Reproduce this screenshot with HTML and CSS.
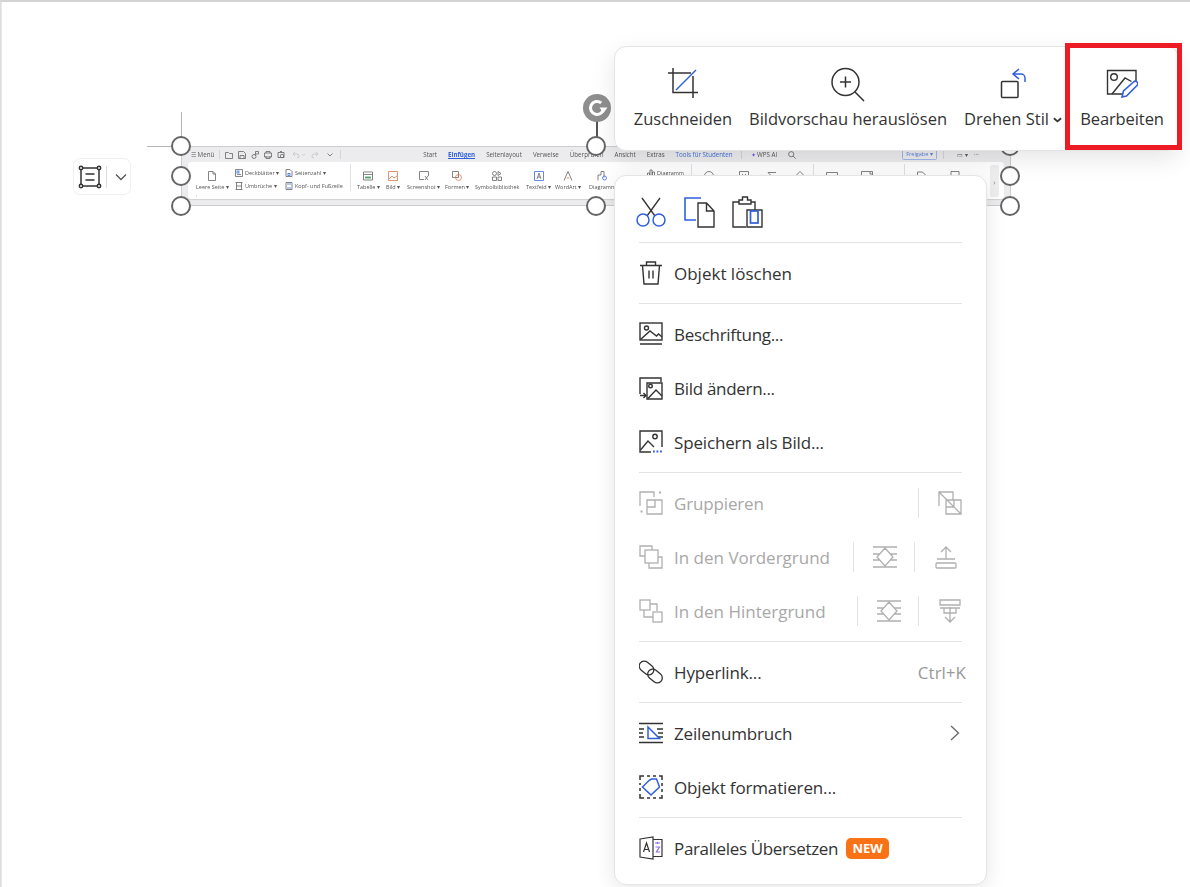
FILE: index.html
```html
<!DOCTYPE html>
<html lang="de">
<head>
<meta charset="utf-8">
<title>Bild Kontextmenü</title>
<link rel="stylesheet" href="styles.css">
</head>
<body>
<div class="canvas">
  <!-- layout options button -->
  <div class="layout-btn">
    <svg class="layout-ico" viewBox="0 0 24 24" width="24" height="24" fill="none" stroke="#333" stroke-width="1.500"><rect x="3" y="3" width="18" height="18"/><path d="M7.500 9h9M7.500 15h9"/><circle cx="3" cy="3" r="1.700" fill="#fff"/><circle cx="21" cy="3" r="1.700" fill="#fff"/><circle cx="3" cy="21" r="1.700" fill="#fff"/><circle cx="21" cy="21" r="1.700" fill="#fff"/></svg>
    <span class="layout-div"></span>
    <svg viewBox="0 0 12 12" width="12" height="12" fill="none" stroke="#555" stroke-width="1.300"><path d="M1 3.500 6 8.500 11 3.500"/></svg>
  </div>

  <!-- guides -->
  <div class="guide-v"></div>
  <div class="guide-h"></div>

  <!-- embedded ribbon picture -->
  <div class="shot">
    <div class="shot-top">
      <span class="t m">☰ Menü</span>
      <span class="vbar"></span>
      <span class="qas">
        <svg viewBox="0 0 8 8" width="8" height="8"><path d="M.5 1.500h3l1 1h3v5h-7z"/></svg>
        <svg viewBox="0 0 8 8" width="8" height="8"><path d="M.5.500h5l2 2v5h-7zM2 7.500v-3h4v3"/></svg>
        <svg viewBox="0 0 8 8" width="8" height="8"><circle cx="3" cy="5.500" r="2"/><path d="M4.500 4V.500h3v2.500h-3"/></svg>
        <svg viewBox="0 0 8 8" width="8" height="8"><path d="M2 2V.500h4V2M.5 2h7v4h-7zM2 5v2.500h4V5"/></svg>
        <svg viewBox="0 0 8 8" width="8" height="8"><path d="M1 1.500h6v5H1zM3 .500h2"/><circle cx="5" cy="5" r="1.700"/></svg>
        <svg class="faint wide" viewBox="0 0 14 8" width="14" height="8"><path d="M1 3l2-2M1 3l2 2M1 3h4a2 2 0 0 1 0 4M10 3l1.500 1.500L13 3"/></svg>
        <svg class="faint" viewBox="0 0 8 8" width="8" height="8"><path d="M7 3L5 1M7 3L5 5M7 3H3a2 2 0 0 0 0 4"/></svg>
        <svg class="mid" viewBox="0 0 6 4" width="6" height="4"><path d="M.5.500L3 3 5.500.500"/></svg>
      </span>
      <span class="vbar"></span>
      <span class="tabs">
        <span class="t">Start</span>
        <span class="t active">Einfügen</span>
        <span class="t">Seitenlayout</span>
        <span class="t">Verweise</span>
        <span class="t">Überprüfen</span>
        <span class="t">Ansicht</span>
        <span class="t">Extras</span>
        <span class="t blue">Tools für Studenten</span>
        <span class="vbar"></span>
        <span class="t"><span class="spark">✦</span> WPS AI</span>
        <svg class="lens" viewBox="0 0 8 8" width="8" height="8"><circle cx="3.200" cy="3.200" r="2.600"/><path d="M5 5l2.700 2.700"/></svg>
      </span>
      <span class="share">Freigabe ▾</span>
      <span class="vbar"></span>
      <span class="t tail">▭ ▾ &nbsp;&nbsp; ···</span>
    </div>
    <div class="shot-ribbon">
      <div class="rb"><svg viewBox="0 0 10 10" width="10" height="10"><path d="M1.500.500h4.500l2.500 2.500v6.500h-7zM6 .500V3h2.500"/></svg><span class="t">Leere Seite ▾</span></div>
      <div class="rb-stack">
        <span class="t"><svg viewBox="0 0 8 8" width="8" height="8"><path d="M.5.500h7v7h-7zM2 5.500h4"/><rect class="bl" x="2" y="2" width="2" height="2"/></svg>Deckblätter ▾</span>
        <span class="t"><svg viewBox="0 0 8 8" width="8" height="8"><path d="M.5.500h7M.5 7.500h7M1.500.500v7M6.500.500v7M1.500 4h5"/></svg>Umbrüche ▾</span>
      </div>
      <div class="rb-stack">
        <span class="t"><svg viewBox="0 0 8 8" width="8" height="8"><path d="M1 .500h4l2 2v5H1z"/><rect class="bl" x="3" y="4.500" width="2" height="2"/></svg>Seitenzahl ▾</span>
        <span class="t"><svg viewBox="0 0 8 8" width="8" height="8"><path d="M1 .500h6v7H1z"/><path class="bl" d="M2 2h4M2 6h4"/></svg>Kopf- und Fußzeile</span>
      </div>
      <span class="rsep"></span>
      <div class="rb"><svg viewBox="0 0 10 10" width="10" height="10"><path d="M.5 1h9v8h-9zM.5 3.500h9"/><path class="gr" d="M3 5v3M5 5v3M7 5v3M2 6.500h6"/></svg><span class="t">Tabelle ▾</span></div>
      <div class="rb"><svg viewBox="0 0 10 10" width="10" height="10"><path class="or" d="M.5.500h9v9h-9zM1 8l3-3 2 2 3-2"/></svg><span class="t">Bild ▾</span></div>
      <div class="rb"><svg viewBox="0 0 10 10" width="10" height="10"><path d="M5 8.500H.5v-8h9V5M6 5l3 4M9 5L6 9"/></svg><span class="t">Screenshot ▾</span></div>
      <div class="rb"><svg viewBox="0 0 10 10" width="10" height="10"><path d="M.5.500h6v6h-6z"/><circle class="or" cx="6.500" cy="6.500" r="3"/></svg><span class="t">Formen ▾</span></div>
      <div class="rb"><svg viewBox="0 0 10 10" width="10" height="10"><circle cx="2.500" cy="2.500" r="2"/><path d="M6 .500l3 2-3 2zM.5 6h4v3.500h-4zM6 6h3.500v3.500H6z"/></svg><span class="t">Symbolbibliothek</span></div>
      <div class="rb"><svg viewBox="0 0 10 10" width="10" height="10"><path class="bl" d="M.5.500h9v9h-9z"/><path d="M3 8l2-6 2 6M3.700 6h2.600"/></svg><span class="t">Textfeld ▾</span></div>
      <div class="rb"><svg viewBox="0 0 10 10" width="10" height="10"><path d="M1 9.500L5 .500l4 9"/><path class="or" d="M3.500 7h3"/></svg><span class="t">WordArt ▾</span></div>
      <div class="rb"><svg viewBox="0 0 10 10" width="10" height="10"><path d="M1 9.500V4h3V.500h3v6"/><circle class="bl" cx="7.500" cy="7" r="2"/></svg><span class="t">Diagramm</span></div>
      <div class="rb-stack"><span class="t"><svg viewBox="0 0 8 8" width="8" height="8"><path d="M.5 7.500V4h2v3.500M3 7.500V1h2v6.500M5.500 7.500V3h2v4.500"/></svg>Diagramm</span></div>
      <span class="rsep"></span>
      <div class="rb"><svg viewBox="0 0 10 10" width="10" height="10"><circle cx="5" cy="5" r="4.500"/></svg></div>
      <div class="rb"><svg viewBox="0 0 10 10" width="10" height="10"><path d="M.5.500h9v9h-9zM3 3l4 4M7 3L3 7"/></svg></div>
      <div class="rb"><svg viewBox="0 0 10 10" width="10" height="10"><path d="M9 1.500H1l4 4-4 4h8"/></svg></div>
      <div class="rb"><svg viewBox="0 0 10 10" width="10" height="10"><path d="M5 .500l4 4-4 4-4-4z"/></svg></div>
      <span class="rsep"></span>
      <div class="rb"><svg viewBox="0 0 12 10" width="12" height="10"><path d="M.5 1.500h11v8H.5z"/></svg></div>
      <div class="rb"><svg viewBox="0 0 12 10" width="12" height="10"><path d="M.5.500h11v9H.5zM8 2h2v2"/></svg></div>
      <span class="rsep"></span>
      <div class="rb"><svg viewBox="0 0 10 10" width="10" height="10"><path d="M.5 1h5l4 4-4 4-5-4z"/></svg></div>
      <div class="rb"><svg viewBox="0 0 10 10" width="10" height="10"><path d="M1 .500h8v9H1z"/></svg></div>
      <span class="rsep"></span>
      <span class="rscroll">›</span>
    </div>
  </div>

  <!-- selection handles -->
  <div class="rot-line"></div>
  <div class="rot">
    <svg viewBox="0 0 28 28" width="28" height="28" fill="none" stroke="#fff" stroke-width="3"><path d="M20.500 14a6.500 6.500 0 1 1-2.300-5"/><path d="M16.500 13.500h8l-4 5.500z" fill="#fff" stroke="none"/></svg>
  </div>
  <span class="h h1"></span><span class="h h2"></span><span class="h h3"></span>
  <span class="h h4"></span><span class="h h5"></span>
  <span class="h h6"></span><span class="h h7"></span><span class="h h8"></span>

  <!-- floating picture toolbar -->
  <div class="toolbar">
    <div class="tool tool-crop">
      <svg viewBox="0 0 32 32" width="32" height="32" fill="none" stroke="#333" stroke-width="1.500"><path d="M1 6h23M6 1v24.500h25M26 9v22"/><path d="M9 23L29 3" stroke="#2f5fdc"/></svg>
      <span>Zuschneiden</span>
    </div>
    <div class="tool tool-prev">
      <svg viewBox="0 0 36 36" width="36" height="36" fill="none" stroke="#333" stroke-width="1.500"><circle cx="15.500" cy="15" r="13.500"/><path d="M15.500 9.500v11M10 15h11M25 25l9 9"/></svg>
      <span>Bildvorschau herauslösen</span>
    </div>
    <div class="tool tool-rot">
      <svg viewBox="0 0 32 34" width="32" height="34" fill="none" stroke="#333" stroke-width="1.500"><rect x="4.500" y="14.500" width="16.500" height="16" rx="1"/><path d="M28 15v-4a4 4 0 0 0-4-4h-8M22 2l-6 5 6 5" stroke="#2f5fdc"/></svg>
      <span>Drehen Stil<svg class="caret" viewBox="0 0 10 6" width="9" height="6" fill="none" stroke="#333" stroke-width="2"><path d="M1 1l4 3.500L9 1"/></svg></span>
    </div>
    <div class="tool tool-edit">
      <svg viewBox="0 0 32 32" width="32" height="32" fill="none" stroke="#333" stroke-width="1.400"><path d="M30 15V3.500H1.500V27H16"/><circle cx="8" cy="10" r="3.300"/><path d="M6 27l13-16 6.500 3.500"/><path d="M16 30l1.500-6 10-9a2.200 2.200 0 0 1 3.500 3.500L20.500 29z" stroke="#2f5fdc" stroke-width="1.600"/></svg>
      <span>Bearbeiten</span>
    </div>
  </div>
  <div class="redbox"></div>

  <!-- context menu -->
  <div class="menu">
    <div class="row clip">
      <svg viewBox="0 0 32 32" width="32" height="32" fill="none" stroke="#333" stroke-width="1.300"><path d="M7 2l13 18M25 2L12 20"/><circle cx="8" cy="24" r="6" stroke="#2f5fdc" stroke-width="1.500"/><circle cx="24" cy="24" r="6" stroke="#2f5fdc" stroke-width="1.500"/></svg>
      <svg viewBox="0 0 32 32" width="32" height="32" fill="none" stroke-width="1.400"><path d="M18 2H2v22h11" stroke="#2f5fdc" stroke-width="1.600"/><path d="M15 7h8.500l7.500 8v16H15zM23.500 7v8H31" stroke="#333"/></svg>
      <svg viewBox="0 0 32 32" width="32" height="32" fill="none" stroke-width="1.400"><path d="M8 6H2v25h13M24 14V6h-4M8 4h3.500V1h5v3H20v4H8z" stroke="#333"/><path d="M16 31h15V14H16z" stroke="#333"/><rect x="19.500" y="15" width="7.500" height="12" stroke="#2f5fdc" stroke-width="1.700"/></svg>
    </div>
    <hr class="sep">
    <div class="row">
      <svg class="ico" viewBox="0 0 24 24" fill="none" stroke="#333" stroke-width="1.400"><path d="M1 4.500h22M7.500 4.500V1h9v3.500M3.500 4.500 5 23h14l1.500-18.500M10 9.500v8M14 9.500v8"/></svg>
      <span class="lbl">Objekt löschen</span>
    </div>
    <hr class="sep">
    <div class="row">
      <svg class="ico" viewBox="0 0 24 24" fill="none" stroke="#333" stroke-width="1.400"><rect x="1" y="1" width="22" height="17"/><circle cx="7.500" cy="6" r="2"/><path d="M1.500 17.500 11 9l6.500 5 2-2 3.500 3M1 22h22"/></svg>
      <span class="lbl tight2">Beschriftung...</span>
    </div>
    <div class="row">
      <svg class="ico" viewBox="0 0 24 24" fill="none" stroke="#333" stroke-width="1.400"><path d="M1 18V2h21v4M8 23V7h15v16z"/><circle cx="11.500" cy="10" r="1.800"/><path d="M8.500 23 17 14l6 6M1 19.500h6M4.500 17l2.500 2.500L4.500 22"/></svg>
      <span class="lbl tight2">Bild ändern...</span>
    </div>
    <div class="row">
      <svg class="ico" viewBox="0 0 24 24" fill="none" stroke="#333" stroke-width="1.400"><path d="M12 22H1V1h22v16"/><circle cx="16" cy="6.500" r="2.200"/><path d="M1.500 20 9 11l6 6"/><path d="M14 21.500h1.800M17.500 21.500h1.800M21 21.500h1.800" stroke="#2f5fdc" stroke-width="2"/></svg>
      <span class="lbl tight1">Speichern als Bild...</span>
    </div>
    <hr class="sep">
    <div class="row off">
      <svg class="ico" viewBox="0 0 24 24" fill="none" stroke="#b0b0b0" stroke-width="1.300"><path d="M1 15V1h14v5M8 9h15v14H8zM8 16h8V9"/><path d="M20 1.500h2M1.500 20.500h2" stroke-width="2"/></svg>
      <span class="lbl tight1">Gruppieren</span>
      <span class="vdiv auto"></span>
      <svg class="ico tool-i" viewBox="0 0 24 24" fill="none" stroke="#b0b0b0" stroke-width="1.300"><path d="M1 15V1h14v8M8 9h15v14H8zM8 16h8V9M1 1l22 22"/></svg>
    </div>
    <div class="row off inset">
      <svg class="ico" viewBox="0 0 24 24" fill="none" stroke="#b0b0b0" stroke-width="1.300"><path d="M6 11H1V1h12v4"/><rect x="6" y="5" width="13" height="13"/><path d="M19 12h4v11H10v-5"/></svg>
      <span class="lbl">In den Vordergrund</span>
      <span class="vdiv auto"></span>
      <svg class="ico tool-i" viewBox="0 0 24 24" fill="none" stroke="#b0b0b0" stroke-width="1.300"><path d="M0 2h24M0 22h24M0 9h7M17 9h7M0 15h7M17 15h7M12 3l8 9-8 9-8-9z"/></svg>
      <span class="vdiv"></span>
      <svg class="ico tool-i" viewBox="0 0 24 24" fill="none" stroke="#b0b0b0" stroke-width="1.300"><path d="M7 7l5-5 5 5M12 2v12M3 14h18M3 18h18a1 1 0 0 1 1 1v3a1 1 0 0 1-1 1H3a1 1 0 0 1-1-1v-3a1 1 0 0 1 1-1z"/></svg>
    </div>
    <div class="row off">
      <svg class="ico" viewBox="0 0 24 24" fill="none" stroke="#b0b0b0" stroke-width="1.300"><rect x="1" y="1" width="10" height="10"/><path d="M11 5h7v7M5 11v7h9"/><rect x="14" y="13" width="9" height="10"/></svg>
      <span class="lbl">In den Hintergrund</span>
      <span class="vdiv auto"></span>
      <svg class="ico tool-i" viewBox="0 0 24 24" fill="none" stroke="#b0b0b0" stroke-width="1.300"><path d="M0 2h24M0 22h24M0 9h7M17 9h7M0 15h7M17 15h7M12 3l8 9-8 9-8-9z"/></svg>
      <span class="vdiv"></span>
      <svg class="ico tool-i" viewBox="0 0 24 24" fill="none" stroke="#b0b0b0" stroke-width="1.300"><path d="M2 1h20v5H2zM2 9h20M6 9v5h12V9M12 8v14M7 18l5 5 5-5"/></svg>
    </div>
    <hr class="sep">
    <div class="row">
      <svg class="ico" viewBox="0 0 24 24" fill="none" stroke="#333" stroke-width="1.300"><rect x="-.5" y="3" width="16" height="10" rx="5" transform="rotate(40 7.500 8)"/><rect x="8" y="11" width="16" height="10" rx="5" transform="rotate(40 16 16)"/></svg>
      <span class="lbl tight1">Hyperlink...</span>
      <span class="shortcut">Ctrl+K</span>
    </div>
    <hr class="sep">
    <div class="row">
      <svg class="ico" viewBox="0 0 24 24" fill="none" stroke="#333" stroke-width="1.300"><path d="M0 2.500h24M0 21.500h24M0 8h5M18 8h6M0 12h4M19 12h5M0 16h5M19 16h5"/><path d="M9 6v11.500h11.500z" stroke="#2f5fdc" stroke-width="1.500"/></svg>
      <span class="lbl tight1">Zeilenumbruch</span>
      <svg class="chev" viewBox="0 0 10 16" width="10" height="16" fill="none" stroke="#666" stroke-width="1.300"><path d="M1 1l7.500 7L1 15"/></svg>
    </div>
    <div class="row">
      <svg class="ico" viewBox="0 0 24 24" fill="none" stroke="#333" stroke-width="1.500"><path d="M1 5V1h4M8 1h3M14 1h3M20 1h3v4M23 8v3M23 14v3M23 20v3h-3M17 23h-3M11 23H8M5 23H1v-4M1 16v-3M1 10V8"/><path d="M3.500 12L10 5.500 12.500 4h5l3 8-8.500 8z" stroke="#2f5fdc"/></svg>
      <span class="lbl tight1">Objekt formatieren...</span>
    </div>
    <hr class="sep">
    <div class="row">
      <svg class="ico" viewBox="0 0 24 24" fill="none" stroke="#333" stroke-width="1.200"><path d="M1 3l13-2v22L1 21zM14 3.500h9v17h-9M4.500 16 7.500 7l3 9M5.500 13.500h4"/><path d="M16 7h5M18.500 6v2M16.500 11h4l-3 5h3.500" stroke="#8b6cf0"/></svg>
      <span class="lbl tight3">Paralleles Übersetzen</span>
      <span class="badge">NEW</span>
    </div>
  </div>
</div>
</body>
</html>
```
FILE: styles.css
```css
* { box-sizing: border-box; }
html, body { margin: 0; padding: 0; background: #fff; }
body { width: 1190px; height: 887px; overflow: hidden; font-family: "Open Sans", "Noto Sans", "Liberation Sans", sans-serif; color: #333; }
.canvas { position: relative; width: 1190px; height: 887px; overflow: hidden; background: #fff; border-top: 2px solid #d4d4d4; border-left: 1px solid #dedede; box-shadow: inset 1px 0 #e8e8e8; }

.layout-btn { position: absolute; left: 72px; top: 156px; width: 58px; height: 37px; display: flex; align-items: center; padding-left: 4px; background: #fff; border: 1px solid #f0f0f0; border-radius: 7px; }
.layout-ico { flex: none; }
.layout-div { width: 1px; height: 22px; background: #dcdcdc; margin: 0 8px 0 4px; flex: none; }

.guide-v { position: absolute; left: 180px; top: 110px; width: 1px; height: 34px; background: #b5b5b5; }
.guide-h { position: absolute; left: 146px; top: 144px; width: 34px; height: 1px; background: #b5b5b5; }

/* tiny picture of a ribbon */
.shot { position: absolute; left: 180px; top: 144px; width: 830px; height: 60px; background: #ececee; border: 1px solid #cdcdd0; filter: blur(.4px); display: flex; flex-direction: column; }
.shot svg { fill: none; stroke: #666; stroke-width: .8; flex: none; }
.shot .bl { stroke: #3f6fe0; }
.shot .gr { stroke: #3e9a5c; }
.shot .or { stroke: #d9784f; }
.t { font-size: 5.500px; color: #555; white-space: nowrap; line-height: 8px; }
.shot-top { height: 15px; display: flex; align-items: center; padding: 0 8px 0 9px; flex: none; }
.shot-top .t { font-size: 6.200px; }
.m { margin-right: 5px; }
.vbar { width: 1px; height: 9px; background: #d4d4d6; flex: none; }
.qas { display: flex; align-items: center; gap: 5px; margin: 0 7px 0 5px; }
.qas .faint { stroke: #c4c4c4; }
.qas .wide { margin-left: 2px; }
.qas .mid { margin-left: 3px; }
.tabs { display: flex; align-items: center; gap: 11px; margin-left: 82px; }
.tabs .vbar { margin: 0 -2px 0 -3px; }
.shot-top .active { color: #2f5fdc; font-weight: 700; border-bottom: 1px solid #2f5fdc; line-height: 7px; margin-top: 1px; }
.shot-top .blue { color: #3f6fd8; }
.spark { color: #7a4ff0; }
.share { margin-left: auto; margin-right: 6px; width: 35px; text-align: center; font-size: 5.500px; line-height: 9px; color: #5a82dc; border: 1px solid #9db6ec; border-radius: 1.500px; white-space: nowrap; }
.shot-top .tail { margin-left: 13px; width: 45px; }
.shot-ribbon { margin: 0 6px; height: 37px; background: #fff; border-radius: 3px; box-shadow: 0 1px 1px rgba(0,0,0,.12); position: relative; padding-left: 8px; display: grid; grid-template-columns: 39px 50px 65px 7px 29px 21px 38px 30px 51px 29px 34px 58px 44px 13px 35px 28px 28px 18px 13px 35px 43px 13px 33px 21px; }
.rb { display: inline-flex; flex-direction: column; align-items: center; justify-self: start; gap: 2px; padding-top: 9px; }
.rb-stack { display: flex; flex-direction: column; gap: 5px; padding-top: 7px; }
.rb-stack .t { display: flex; align-items: center; gap: 2px; }
.rsep { width: 1px; background: #e2e2e4; margin: 2px 0; }
.rscroll { position: absolute; right: 5px; top: 3px; bottom: 2px; width: 9px; background: #eee; border-radius: 2px; font-size: 8px; color: #888; display: flex; align-items: center; justify-content: center; }

.rot-line { position: absolute; left: 595px; top: 116px; width: 2px; height: 28px; background: #555; }
.rot { position: absolute; left: 582px; top: 92px; width: 28px; height: 28px; border-radius: 50%; background: #8e8e8e; display: flex; }
.h { position: absolute; width: 20px; height: 20px; margin: -10px 0 0 -10px; border-radius: 50%; background: #fff; border: 2px solid #666; }
.h1 { left: 180px; top: 144px; } .h2 { left: 180px; top: 174px; } .h3 { left: 180px; top: 204px; }
.h4 { left: 595px; top: 144px; } .h5 { left: 595px; top: 204px; }
.h6 { left: 1009px; top: 144px; } .h7 { left: 1009px; top: 174px; } .h8 { left: 1009px; top: 204px; }

/* floating toolbar: items sit at their own centres */
.toolbar { position: absolute; left: 613px; top: 44px; width: 565px; height: 105px; background: #fff; border: 1px solid #e4e4e4; border-radius: 12px; box-shadow: 0 8px 24px rgba(0,0,0,.10); }
.tool { position: absolute; top: 0; height: 100%; display: flex; flex-direction: column; align-items: center; font-size: 16.500px; color: #333; white-space: nowrap; }
.tool > svg { position: absolute; top: 20px; }
.tool > span { position: absolute; top: 60px; line-height: 24px; }
.tool-crop { left: 68px; } .tool-prev { left: 233px; } .tool-rot { left: 398px; } .tool-edit { left: 507px; }
.tool-edit > span { letter-spacing: -.1px; }
.caret { margin-left: 4px; vertical-align: 2px; }
.redbox { position: absolute; left: 1064px; top: 41px; width: 117px; height: 107px; border: 5px solid #ed1c24; }

/* context menu */
.menu { position: absolute; left: 613px; top: 173px; width: 373px; height: 710px; padding: 9px 24px; background: #fff; border: 1px solid #e4e4e4; border-radius: 12px; box-shadow: 0 4px 20px rgba(0,0,0,.10); }
.row { display: flex; align-items: center; height: 54px; font-size: 17px; color: #333; white-space: nowrap; }
.clip { gap: 16px; margin-left: -4px; }
.ico { width: 24px; height: 24px; flex: none; margin-right: 11px; }
.lbl { line-height: 24px; position: relative; top: 1px; }
.tight1 { letter-spacing: -.15px; }
.tight2 { letter-spacing: -.3px; }
.tight3 { letter-spacing: -.35px; }
.off { color: #a8a8a8; }
.inset { padding-right: 4px; }
.sep { margin: 3px 0; border: 0; height: 1px; background: #e3e3e3; }
.vdiv { width: 1px; height: 30px; background: #e3e3e3; margin: 0 19px 0 17px; flex: none; }
.vdiv.auto { margin-left: auto; }
.tool-i { margin-right: 0; }
.shortcut { margin-left: auto; margin-right: -4px; color: #9a9a9a; }
.chev { margin-left: auto; margin-right: 2px; }
.badge { margin-left: 8px; width: 43px; text-align: center; height: 21px; line-height: 21px; background: #f97316; color: #fff; font-size: 13px; font-weight: 700; border-radius: 5px; }
```
